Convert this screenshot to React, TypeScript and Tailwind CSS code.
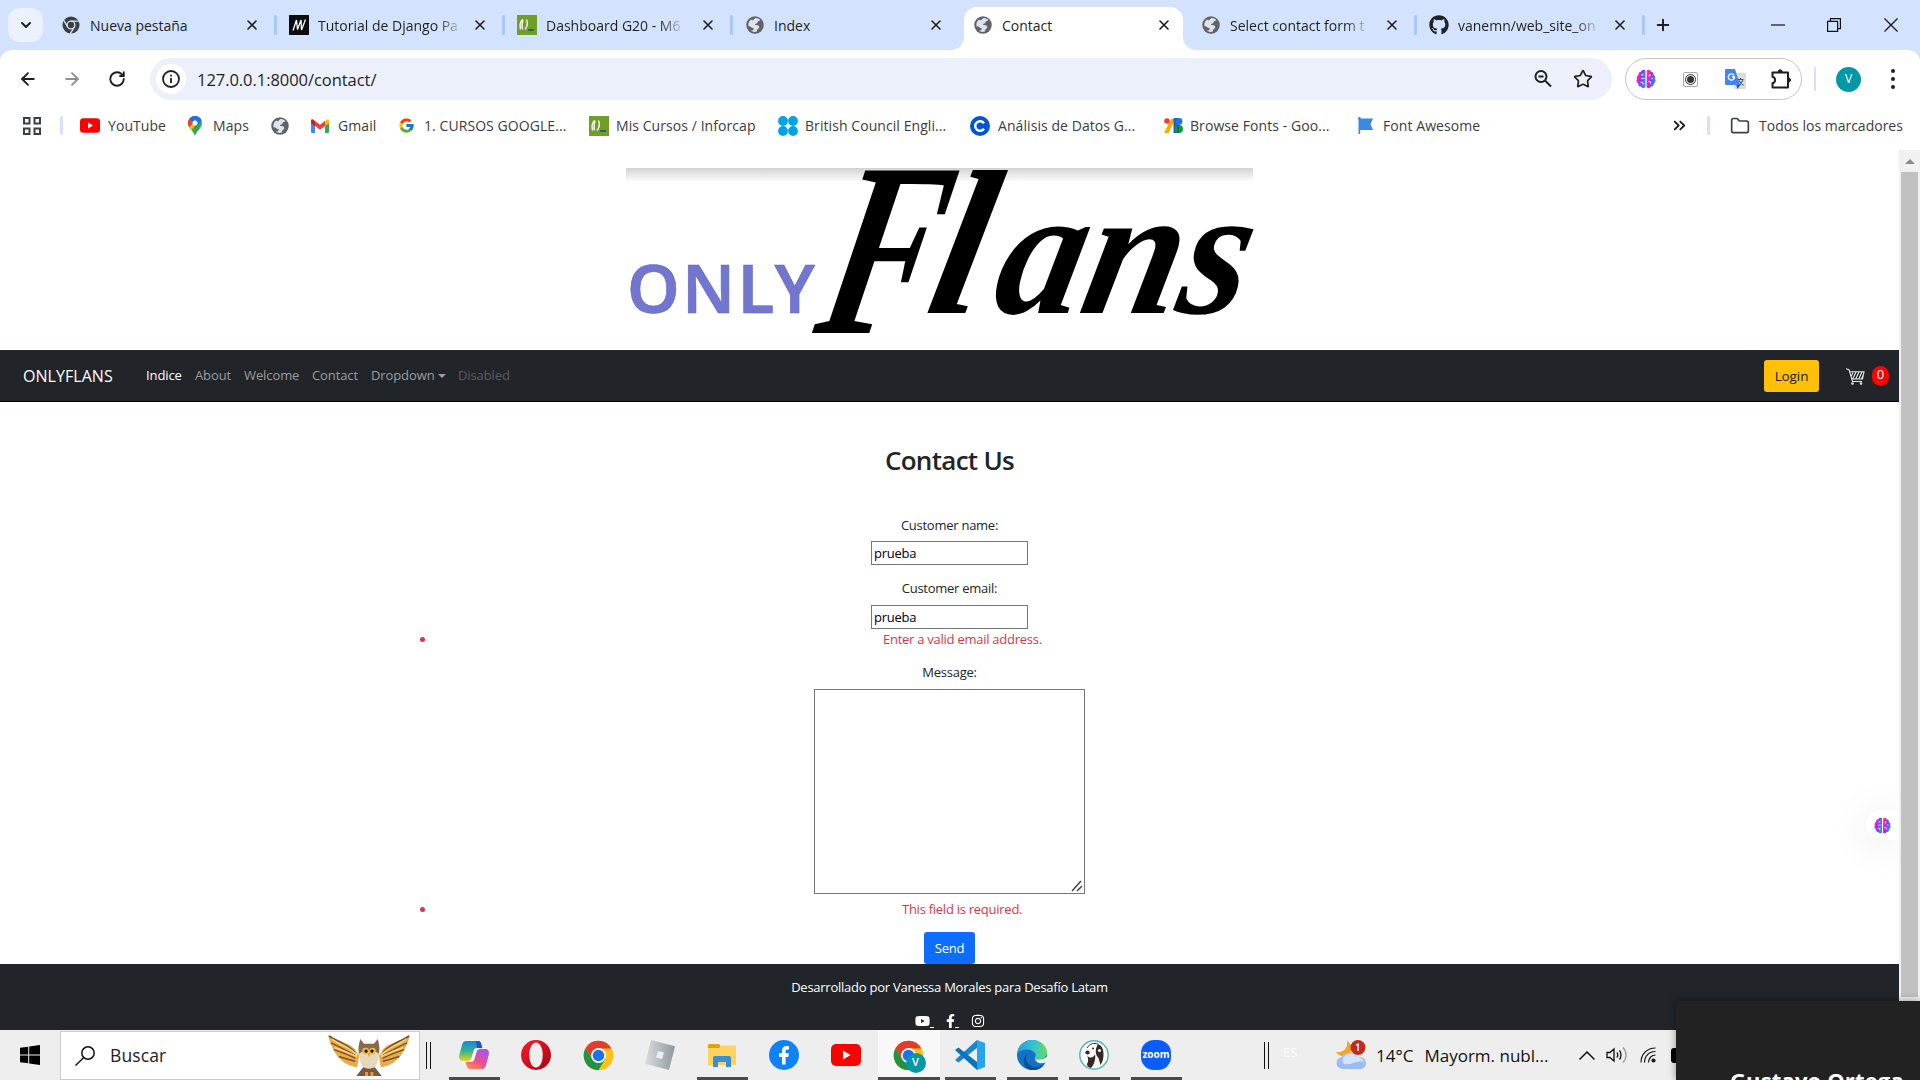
import type { ReactNode } from "react";
import { X, ChevronDown, ArrowLeft, ArrowRight, RotateCw, ZoomOut, Star, Plus, Folder, ChevronsRight } from "lucide-react";
import { FcGoogle } from "react-icons/fc";
import { FaGithub, FaFacebookF, FaYoutube, FaInstagram } from "react-icons/fa";

const Globe = () => (
  <svg viewBox="0 0 20 20" className="size-[18px]">
    <circle cx="10" cy="10" r="9.7" fill="#5f6368" />
    <path d="M10.5 2.3c2.8-.2 4.5 1.3 5.6 2.5-1 1-3.2.6-3.4 2.4-.1 1.4-2.8.8-2.6 2.8 2.7-.4 4.8.4 4.6 2.6-.2 1.8-2.4 1.6-2.6 4.6-2.3 1-5.300.3-6.800-1.100 2.300.2 3.400-.7 3.300-2.500-2.600.2-2.800-2.600-5.900-2.300C2.300 8.300 3.500 5.500 5.600 4c1.200 1.200 2.900 1.100 3.100-.3z" fill="#dfe3ea" />
  </svg>
);

const ChromeDark = () => (
  <svg viewBox="0 0 20 20" className="size-[18px]">
    <circle cx="10" cy="10" r="9.5" fill="#3c4043" />
    <g stroke="#d3e3fd" strokeWidth="1.5" fill="none">
      <circle cx="10" cy="10" r="4.300" />
      <path d="M10 5.700H18.800M6.300 12.200L2 4.800M13.700 12.200L9.300 19.500" />
    </g>
  </svg>
);

const ChromeColor = ({ cls }: { cls: string }) => (
  <svg viewBox="0 0 48 48" className={cls}>
    <circle cx="24" cy="24" r="23" fill="#fbc116" />
    <path d="M24 1A23 23 0 0 0 4.100 12.500L14 29.500 24 13h19.900A23 23 0 0 0 24 1z" fill="#e33b2e" />
    <path d="M4.100 12.500A23 23 0 0 0 24 47l10-17.300-10 5.300-10-5.500z" fill="#229342" />
    <circle cx="24" cy="24" r="11.500" fill="#fff" />
    <circle cx="24" cy="24" r="9" fill="#1a73e8" />
  </svg>
);

const CodeLogo = () => (
  <svg viewBox="0 0 20 20" className="size-5">
    <rect width="20" height="20" fill="#6f9f27" />
    <path d="M5.500 4.500C3 7 2.700 11 3.500 14.500M6 4.500C5 8 4.500 11 5.500 14.500M9.500 4.500c1.600 3.500.8 7-1.500 10" stroke="#fff" strokeWidth="1.300" fill="none" />
    <path d="M11 15h6" stroke="#235a7c" strokeWidth="1.800" />
  </svg>
);

const MLogo = () => (
  <svg viewBox="0 0 20 20" className="size-5">
    <rect width="20" height="20" fill="#0b0b10" />
    <path d="M4 15.500L7.500 5l1 9.500L12 5l.5 10L16.500 4.500" stroke="#fff" strokeWidth="1.300" fill="none" />
  </svg>
);

const YouTube = ({ cls }: { cls: string }) => (
  <svg viewBox="0 0 30 22" className={cls}>
    <rect width="30" height="22" rx="5" fill="#f00" />
    <path d="M12 6.500v9l7.500-4.500z" fill="#fff" />
  </svg>
);

const MapsPin = () => (
  <svg viewBox="0 0 14 20" className="h-5 w-[14px]">
    <path d="M7 0a7 7 0 0 1 7 7c0 5-5 7-7 13C5 14 0 12 0 7a7 7 0 0 1 7-7z" fill="#34a853" />
    <path d="M7 0a7 7 0 0 1 6.600 4.600L7 12 .5 5A7 7 0 0 1 7 0z" fill="#1a73e8" />
    <path d="M1.500 2.700L5 6l-3.400 5.300A7 7 0 0 1 1.500 2.700z" fill="#ea4335" />
    <path d="M1.500 11.200L7.500 4l2 3-5.800 7z" fill="#fbbc04" />
    <circle cx="7" cy="7" r="2.500" fill="#fff" />
  </svg>
);

const Gmail = () => (
  <svg viewBox="0 0 18 14" className="h-[14px] w-[18px]">
    <path d="M0 2v11a1 1 0 0 0 1 1h3V5z" fill="#4285f4" />
    <path d="M18 2v11a1 1 0 0 1-1 1h-3V5z" fill="#34a853" />
    <path d="M14 2l2-1.500c1-.6 2 0 2 1.500v2.200L14 7z" fill="#fbbc04" />
    <path d="M4 2L2 .5C1-.1 0 .5 0 2v2.200L4 7z" fill="#c5221f" />
    <path d="M4 2l5 3.800L14 2v5l-5 3.800L4 7z" fill="#ea4335" />
  </svg>
);

const Council = () => (
  <svg viewBox="0 0 20 20" className="size-5" fill="#00a3e6">
    <circle cx="5" cy="5" r="4.900" /><circle cx="15" cy="5" r="4.900" /><circle cx="5" cy="15" r="4.900" /><circle cx="15" cy="15" r="4.900" />
  </svg>
);

const Coursera = () => (
  <svg viewBox="0 0 20 20" className="size-5">
    <circle cx="10" cy="10" r="10" fill="#0056d2" />
    <path d="M14 7.300a4.800 4.800 0 1 0 0 5.400" stroke="#fff" strokeWidth="2.400" fill="none" />
  </svg>
);

const Fonts = () => (
  <svg viewBox="0 0 19 15" className="h-[15px] w-[19px]">
    <path d="M7 1h3v3L4.500 15H0z" fill="#f9ab00" />
    <circle cx="3" cy="3" r="2.800" fill="#ea4335" />
    <path d="M9.500 0h5v15h-5z" fill="#1a5fd0" />
    <circle cx="15" cy="3.400" r="3.400" fill="#1a73e8" />
    <circle cx="15" cy="11" r="4" fill="#149b3c" />
    <path d="M13.500 7h1.200v8h-1.200z" fill="#0d5a3c" />
  </svg>
);

const Flag = () => (
  <svg viewBox="0 0 15 17" className="h-[17px] w-[15px]">
    <circle cx="1.400" cy="1.400" r="1.400" fill="#3c8ae0" />
    <path d="M.5 1.500H15l-2.500 5.800L15 13H2.200v4H.5z" fill="#3c8ae0" />
  </svg>
);

const Brain = ({ cls, id }: { cls: string; id: string }) => (
  <svg viewBox="0 0 20 20" className={cls}>
    <defs>
      <linearGradient id={id} x1="0" x2="1" y1="0" y2=".4">
        <stop offset="0" stopColor="#ff7a2a" /><stop offset=".2" stopColor="#fb2f9a" /><stop offset=".45" stopColor="#c026e8" /><stop offset=".65" stopColor="#7a46f5" /><stop offset="1" stopColor="#2b88ff" />
      </linearGradient>
    </defs>
    <g fill={`url(#${id})`}>
      <path d="M9.400 1.500C8.500.2 5.500.6 5 2.700 3 2.800 2 4.600 2.500 6 .7 6.800.2 8.600 1 10c-1 1.500-.6 3.600 1.200 4.400C2 16.500 3.500 17.700 5 17.500c.8 2 3.800 2.100 4.400.6z" />
      <path d="M10.600 1.500C11.500.2 14.500.6 15 2.700c2 .1 3 1.900 2.500 3.300 1.800.8 2.300 2.600 1.500 4 1 1.500.6 3.600-1.200 4.400.2 2.100-1.300 3.300-2.800 3.100-.8 2-3.800 2.100-4.400.6z" />
    </g>
    <path d="M8.500 9.500H5m0-3.500h2V4.500m0 11v-2H4.500M12.500 7H14V5M12 12.500h2.500v2.500M15 9.500h2" stroke="#fff" strokeWidth=".8" fill="none" />
  </svg>
);

const tabs: { icon: ReactNode; title: string; active?: boolean; sep?: boolean; fade?: boolean }[] = [
  { icon: <ChromeDark />, title: "Nueva pestaña", sep: true },
  { icon: <MLogo />, title: "Tutorial de Django Pa", sep: true, fade: true },
  { icon: <CodeLogo />, title: "Dashboard G20 - M6", sep: true, fade: true },
  { icon: <Globe />, title: "Index" },
  { icon: <Globe />, title: "Contact", active: true },
  { icon: <Globe />, title: "Select contact form t", sep: true, fade: true },
  { icon: <FaGithub className="size-5 text-[#1f2328]" />, title: "vanemn/web_site_on", sep: true, fade: true },
];

const bookmarks: { icon: ReactNode; text: string; box: string; gap: string }[] = [
  { icon: <YouTube cls="h-[15px] w-5" />, text: "YouTube", box: "w-[108px]", gap: "gap-2" },
  { icon: <MapsPin />, text: "Maps", box: "w-[83px]", gap: "gap-[11px]" },
  { icon: <Globe />, text: "", box: "w-[40px]", gap: "gap-2" },
  { icon: <Gmail />, text: "Gmail", box: "w-[87px]", gap: "gap-[9px]" },
  { icon: <FcGoogle className="size-[17px]" />, text: "1. CURSOS GOOGLE...", box: "w-[191px]", gap: "gap-[9px]" },
  { icon: <CodeLogo />, text: "Mis Cursos / Inforcap", box: "w-[189px]", gap: "gap-[7px]" },
  { icon: <Council />, text: "British Council Engli...", box: "w-[192px]", gap: "gap-[7px]" },
  { icon: <Coursera />, text: "Análisis de Datos G...", box: "w-[194px]", gap: "gap-2" },
  { icon: <Fonts />, text: "Browse Fonts - Goo...", box: "w-[194px]", gap: "gap-[7px]" },
  { icon: <Flag />, text: "Font Awesome", box: "w-[160px]", gap: "gap-[10px]" },
];

function TabStrip() {
  return (
    <div className="flex h-[50px] bg-[#d3e3fd]">
      <div className="ml-2 mt-2 flex h-[34px] w-[35px] items-center justify-center rounded-[12px] bg-[#ebf2fe]">
        <ChevronDown className="size-4 text-[#1f1f1f]" strokeWidth={3} />
      </div>
      <div className="ml-[6px] flex">
        {tabs.map((t) => (
          <div key={t.title} className="relative flex w-[228px] items-center pl-3">
            {t.active && (
              <>
                <div className="absolute bottom-0 left-[3px] h-[43px] w-[219px] rounded-t-[13px] bg-white" />
                <svg className="absolute bottom-0 left-[-10px] size-[13px]" viewBox="0 0 13 13"><path d="M13 0v13H0A13 13 0 0 0 13 0z" fill="#fff" /></svg>
                <svg className="absolute bottom-0 right-[-7px] size-[13px]" viewBox="0 0 13 13"><path d="M0 0v13h13A13 13 0 0 1 0 0z" fill="#fff" /></svg>
              </>
            )}
            <div className="relative flex w-5 justify-center">{t.icon}</div>
            <div className="relative ml-[9px] w-[144px] text-[14px] whitespace-nowrap text-[#1f1f1f]">
              <span className={t.fade ? "bg-gradient-to-r from-[#1f1f1f] from-85% to-[#1f1f1f30] bg-clip-text text-transparent" : ""}>{t.title}</span>
            </div>
            <X className="relative ml-[10px] size-4 text-[#1f1f1f]" strokeWidth={2.4} />
            {t.sep && <div className="ml-auto h-5 w-[3px] rounded-full bg-[#a8c7fa]" />}
          </div>
        ))}
      </div>
      <div className="flex items-center pl-[9px]"><Plus className="size-[18px] text-[#1f1f1f]" strokeWidth={2.600} /></div>
      <div className="ml-auto flex items-center">
        <svg viewBox="0 0 14 14" className="mr-[42px] size-[14px]"><path d="M0 7h14" stroke="#111" strokeWidth="1.200" /></svg>
        <svg viewBox="0 0 14 14" className="mr-[43px] size-[14px]" fill="none" stroke="#111" strokeWidth="1.200"><path d="M.6 3.400h10v10h-10zM3.400 3.400V.6h10v10h-2.800" /></svg>
        <svg viewBox="0 0 14 14" className="mr-[22px] size-[14px]"><path d="M.5.5l13 13M13.500.5l-13 13" stroke="#111" strokeWidth="1.200" /></svg>
      </div>
    </div>
  );
}

function Toolbar() {
  return (
    <div className="bg-[#d3e3fd]">
      <div className="flex h-[58px] items-center rounded-t-[12px] bg-white pl-[18px]">
        <ArrowLeft className="size-5 text-[#1f1f1f]" strokeWidth={2.200} />
        <ArrowRight className="ml-6 size-5 text-[#8f9092]" strokeWidth={2.200} />
        <RotateCw className="ml-[26px] size-[18px] text-[#1f1f1f]" strokeWidth={2.500} />
        <div className="ml-6 flex h-[42px] w-[1462px] items-center rounded-full bg-[#ebf0fa]">
          <div className="ml-[6px] flex size-[30px] items-center justify-center rounded-full bg-white">
            <svg viewBox="0 0 18 18" className="size-[18px]" fill="none" stroke="#1f1f1f" strokeWidth="1.800"><circle cx="9" cy="9" r="8" /><path d="M9 8v5M9 4.800v1.800" /></svg>
          </div>
          <div className="ml-[11px] pt-[2px] text-[16.500px] tracking-[-0.05px] text-[#1f1f1f]">127.0.0.1:8000/contact/</div>
          <svg viewBox="0 0 20 20" className="ml-auto size-5" fill="none" stroke="#1f1f1f" strokeWidth="2"><circle cx="8" cy="7.500" r="5.500" /><path d="M5.500 7.500h5M12 11.500l6 6" /></svg>
          <Star className="ml-5 mr-[19px] size-5 text-[#1f1f1f]" strokeWidth={2} />
        </div>
        <div className="ml-[13px] flex h-[42px] w-[177px] items-center rounded-full border border-[#c4c7c5] pl-[10px]">
          <Brain cls="size-5" id="brain-toolbar" />
          <div className="ml-[27px] flex size-[15px] items-center justify-center rounded-[2px] border border-[#aaa]">
            <div className="flex size-[11px] items-center justify-center rounded-full border border-[#333]"><div className="size-[7px] rounded-full bg-[#333]" /></div>
          </div>
          <svg viewBox="0 0 21 21" className="ml-[27px] size-[21px]">
            <rect x="9" y="4" width="12" height="16" rx="1" fill="#dadce0" />
            <path d="M11 15h5l-3.500 5z" fill="#1b4fc4" />
            <path d="M1 0h9l5 16H1a1 1 0 0 1-1-1V1a1 1 0 0 1 1-1z" fill="#4285f4" />
            <path d="M9 6.300A3.100 3.100 0 1 0 9.500 8H6.800" stroke="#fff" strokeWidth="1.400" fill="none" />
            <path d="M12.500 10.500h6M15.500 9v1.500M17.800 11c-.5 2.500-2 4-4 5.500M14 11.500c1 2.500 2.500 3.500 4.500 4.800" stroke="#455a64" strokeWidth="1.100" fill="none" />
          </svg>
          <svg viewBox="0 0 22 22" className="ml-6 size-[22px]" fill="none" stroke="#1f1f1f" strokeWidth="2">
            <path d="M2.500 4.500H18V19.500H2.500v-4.200a3.400 3.400 0 0 0 0-6.600z" strokeLinejoin="round" />
            <path d="M8.200 3.800a2 2 0 0 1 4 0zM18.500 10a2 2 0 0 1 0 4z" fill="#1f1f1f" strokeWidth="1" />
          </svg>
        </div>
        <div className="ml-[12px] h-6 w-[2px] bg-[#d3e3fd]" />
        <div className="ml-5 flex size-[25px] items-center justify-center rounded-full bg-[#0097a7] text-[12px] text-white">V</div>
        <div className="ml-[30px] flex flex-col gap-[4px]">
          <i className="size-1 rounded-full bg-[#1f1f1f]" /><i className="size-1 rounded-full bg-[#1f1f1f]" /><i className="size-1 rounded-full bg-[#1f1f1f]" />
        </div>
      </div>
    </div>
  );
}

function BookmarkBar() {
  return (
    <div className="flex h-[42px] items-center bg-white pb-[7px] text-[14px] tracking-[0.07px] whitespace-nowrap text-[#3c3c3c]">
      <svg viewBox="0 0 18 18" className="ml-[23px] size-[18px]" fill="none" stroke="#3c4043" strokeWidth="2"><path d="M1 1h5.500v5.500H1zM11.500 1H17v5.500h-5.500zM1 11.500h5.500V17H1zM11.500 11.500H17V17h-5.500z" /></svg>
      <div className="ml-[19px] h-[19px] w-[3px] rounded-full bg-[#d3e3fd]" />
      <div className="ml-[17px] flex">
        {bookmarks.map((b, i) => (
          <div key={i} className={`flex items-center ${b.gap} ${b.box}`}>{b.icon}<span>{b.text}</span></div>
        ))}
      </div>
      <ChevronsRight className="ml-auto size-[19px] text-[#1f1f1f]" strokeWidth={2.300} />
      <div className="ml-[18px] h-[19px] w-[3px] rounded-full bg-[#d3e3fd]" />
      <Folder className="ml-5 size-5 text-[#3c4043]" strokeWidth={2} />
      <div className="ml-[9px] w-[161px] tracking-normal">Todos los marcadores</div>
    </div>
  );
}

function Logo() {
  return (
    <div className="ml-[626px] mt-[18px] h-[182px] w-[627px]">
      <div className="h-[14px] bg-gradient-to-b from-[#d2d2d2] to-white" />
      <svg viewBox="0 14 627 168" className="block h-[168px] w-[627px] overflow-visible">
        <text x="1" y="145" fontFamily="'Noto Sans','Open Sans',sans-serif" fontSize="67" fontWeight="600" fill="#7376cf" stroke="#6468cb" strokeWidth=".6" textLength="188">ONLY</text>
        <g fontFamily="'Liberation Serif',serif" fontStyle="italic" fontWeight="700" fill="#000">
          <text transform="translate(186 165) skewX(-12)" fontSize="248" textLength="116" lengthAdjust="spacingAndGlyphs">F</text>
          <text transform="translate(297 145) skewX(-12)" fontSize="206" textLength="55" lengthAdjust="spacingAndGlyphs">l</text>
          <text transform="translate(363 145) skewX(-12)" fontSize="184" textLength="252" lengthAdjust="spacingAndGlyphs">ans</text>
        </g>
      </svg>
    </div>
  );
}

function Nav() {
  return (
    <nav className="flex h-[52px] items-center border-b border-black bg-[#212529] pt-px text-[13px] tracking-[-0.1px] whitespace-nowrap">
      <div className="ml-[23px] w-[123px] text-[16px] tracking-[0.05px] text-white">ONLYFLANS</div>
      <div className="w-[49px] text-white">Indice</div>
      <div className="w-[49px] text-[#9b9d9e]">About</div>
      <div className="w-[68px] text-[#9b9d9e]">Welcome</div>
      <div className="w-[59px] text-[#9b9d9e]">Contact</div>
      <div className="flex w-[87px] items-center text-[#9b9d9e]">Dropdown<i className="ml-[3px] border-x-4 border-t-4 border-x-transparent border-t-[#9b9d9e]" /></div>
      <div className="text-[#595c5f]">Disabled</div>
      <div className="ml-auto flex h-8 w-[55px] items-center justify-center rounded-[3px] bg-[#ffc107] text-[13.500px] text-[#1a1a1a]">Login</div>
      <svg viewBox="0 0 19 17" className="ml-[27px] h-[17px] w-[19px]" fill="none" stroke="#e8e8e8" strokeWidth="1.100">
        <path d="M0 .8l3 .8L6.500 13.500H16M4 3.800h14L16.500 11H6M7 4.500L5.300 8M10 4l-3.300 7M13 4l-3.300 7M16 4l-3.300 7M18 5l-2.500 6" /><circle cx="6.500" cy="15.500" r=".8" /><circle cx="15" cy="15.500" r=".8" />
      </svg>
      <div className="ml-[7px] mr-[10px] flex h-5 w-[17px] items-center justify-center rounded-full bg-[#f00] pb-[2px] text-[13px] text-white underline decoration-[#0d6efd] underline-offset-2">0</div>
    </nav>
  );
}

function ErrorItem({ text, pad }: { text: string; pad: string }) {
  return (
    <div className="flex h-5 items-center text-[13px] text-[#dc3545]">
      <div className="ml-[420px] size-[5px] rounded-full bg-[#dc3545]" />
      <div className={pad}>{text}</div>
    </div>
  );
}

function ContactPage() {
  return (
    <div className="flex h-[562px] flex-col bg-white text-[13px] leading-5 tracking-[-0.26px] text-[#212529]">
      <h1 className="mt-[38px] text-center text-[26px] leading-[40px] font-semibold tracking-[-0.7px]">Contact Us</h1>
      <div className="mt-[35px] text-center">Customer name:</div>
      <div className="mt-[6px] flex h-6 w-[157px] items-center self-center border border-[#767676] pl-[2px] text-black">prueba</div>
      <div className="mt-[13px] text-center">Customer email:</div>
      <div className="mt-[7px] flex h-6 w-[157px] items-center self-center border border-[#767676] pl-[2px] text-black">prueba</div>
      <ErrorItem text="Enter a valid email address." pad="ml-[458px]" />
      <div className="mt-[13px] text-center">Message:</div>
      <div className="mt-[7px] flex h-[205px] w-[271px] items-end justify-end self-center border border-[#767676]">
        <svg viewBox="0 0 12 12" className="mb-[1px] mr-[1px] size-[12px]" stroke="#444" strokeWidth="1.500"><path d="M1 11L10 1M6 11l5-5" /></svg>
      </div>
      <div className="h-[5px]" />
      <ErrorItem text="This field is required." pad="ml-[477px]" />
      <div className="mt-[13px] flex h-8 w-[51px] items-center justify-center self-center rounded-[3px] bg-[#0d6efd] text-white">Send</div>
    </div>
  );
}

function Footer() {
  return (
    <footer className="h-[66px] bg-[#212529] text-white">
      <div className="pt-[13px] text-center text-[13px] leading-5 tracking-[-0.25px]">Desarrollado por Vanessa Morales para Desafío Latam</div>
      <div className="mt-[17px] flex items-center pl-[915px]">
        <FaYoutube className="h-[14px] w-[15px]" /><i className="mt-[13px] h-px w-[4px] bg-white" />
        <FaFacebookF className="ml-[12px] h-[14px] w-[9px]" /><i className="mt-[13px] h-px w-[4px] bg-white" />
        <FaInstagram className="ml-[12px] size-[14px]" />
      </div>
    </footer>
  );
}

function ScrollBar() {
  return (
    <div className="flex w-[21px] flex-col items-center bg-[#f1f1f1]">
      <div className="flex h-[22px] items-center"><i className="border-x-[5px] border-b-[5px] border-x-transparent border-b-[#8a8a8a]" /></div>
      <div className="h-[825px] w-[17px] bg-[#c1c1c1]" />
    </div>
  );
}

const Owl = () => (
  <svg viewBox="0 0 84 44" className="h-[43px] w-[84px]">
    <path d="M0 1c8 6 20 7 27 14l5 7-2 12C14 32 5 20 0 1zM84 1C76 7 64 8 57 15l-5 7 2 12C70 32 79 20 84 1z" fill="#e9ab48" />
    <path d="M1 2c9 6 19 8 27 17M3 9c9 4 16 8 25 13M6 16c8 3 15 5 22 9M11 23c6 2 10 3 17 5M83 2c-9 6-19 8-27 17M81 9c-9 4-16 8-25 13M78 16c-8 3-15 5-22 9M73 23c-6 2-10 3-17 5" stroke="#7b5227" strokeWidth="1.500" fill="none" />
    <path d="M4 5c9 7 19 8 26 17M7 14c8 3 15 5 22 9M80 5c-9 7-19 8-26 17M77 14c-8 3-15 5-22 9" stroke="#ffdc8a" strokeWidth="1.300" fill="none" />
    <path d="M33 5l4 5h10l4-5c2 8 2 11 1 16H32c-1-5-1-8 1-16z" fill="#86694e" />
    <path d="M32 20c0 10 4 17 10 17s10-7 10-17c-6-4-14-4-20 0z" fill="#e6d8bd" />
    <path d="M36 34l-7 9h26l-7-9c-4 2-8 2-12 0z" fill="#765942" />
    <circle cx="38.500" cy="17.500" r="3.500" fill="#f0b93d" /><circle cx="45.500" cy="17.500" r="3.500" fill="#f0b93d" />
    <circle cx="39" cy="17.500" r="1.700" fill="#111" /><circle cx="45" cy="17.500" r="1.700" fill="#111" />
    <path d="M40.500 19.500h3L42 24zM38 39h3v4h-3zM43.500 39h3v4h-3z" fill="#f39a23" />
  </svg>
);

const Copilot = () => (
  <svg viewBox="0 0 30 28" className="h-7 w-[30px]">
    <defs>
      <linearGradient id="cp-a" x1="0" y1="0" x2="0" y2="1"><stop offset="0" stopColor="#1588e0" /><stop offset=".5" stopColor="#35b38c" /><stop offset="1" stopColor="#e9d51c" /></linearGradient>
      <linearGradient id="cp-b" x1="0" y1="1" x2=".6" y2="0"><stop offset="0" stopColor="#ff9a4a" /><stop offset=".5" stopColor="#ef4f86" /><stop offset="1" stopColor="#a656e8" /></linearGradient>
    </defs>
    <path d="M7 0h12c2.500 0 3 2 3.500 4l.8 3H18c-2 0-3 1-3.500 3l-2 7c-.6 2-2 3-4 3H4c-4 0-4.500-3-3.500-7L3 4c.6-2.500 2-4 4-4z" fill="url(#cp-a)" />
    <path d="M23 28H11c-2.500 0-3-2-3.500-4l-.8-3H12c2 0 3-1 3.500-3l2-7c.6-2 2-3 4-3H26c4 0 4.500 3 3.500 7L27 24c-.6 2.500-2 4-4 4z" fill="url(#cp-b)" />
    <path d="M17 0h2c2.500 0 3 2 3.500 4l.8 3H18z" fill="#2454c7" />
    <path d="M17.300 10.500l-3.600 9.500-1-3 2-7c.4-1.200 1-2 2.800-2.600z" fill="#fff" />
  </svg>
);

const Opera = () => (
  <svg viewBox="0 0 30 30" className="size-[30px]">
    <defs><linearGradient id="op" x1="0" x2="1" y1="0" y2="1"><stop offset="0" stopColor="#ff1b2d" /><stop offset="1" stopColor="#a70014" /></linearGradient></defs>
    <path fillRule="evenodd" d="M15 0a15 15 0 1 1 0 30 15 15 0 0 1 0-30zm0 2.500C11 2.500 8.300 8 8.300 15S11 27.500 15 27.500 21.700 22 21.700 15 19 2.500 15 2.500z" fill="url(#op)" />
  </svg>
);

const Roblox = () => (
  <svg viewBox="0 0 30 30" className="size-[30px]">
    <defs><linearGradient id="rb" x1="0" x2="1"><stop offset="0" stopColor="#d9dde1" /><stop offset="1" stopColor="#8f979f" /></linearGradient></defs>
    <path d="M6 0l24 6.200L24 30 0 23.800z" fill="url(#rb)" />
    <path d="M13 11l-2 6.500 6 1.600 2-6.500z" fill="#eceef0" />
  </svg>
);

const Explorer = () => (
  <svg viewBox="0 0 28 23" className="h-[23px] w-7">
    <path d="M0 1a1 1 0 0 1 1-1h10l2 3-2 2H0z" fill="#e0a010" />
    <path d="M0 4h11l2-2.500h14a1 1 0 0 1 1 1V21H0z" fill="#ffd260" />
    <path d="M5 23v-9a2 2 0 0 1 2-2h14a2 2 0 0 1 2 2v9h-5v-5h-8v5z" fill="#3a8fd4" />
  </svg>
);

const VsCode = () => (
  <svg viewBox="0 0 30 30" className="size-[30px]">
    <path d="M22 0v8L3.500 22.500 0 20z" fill="#1b86cf" />
    <path d="M22 30v-8L3.500 7.500 0 10z" fill="#0a72b8" />
    <path d="M22 0l8 3v24l-8 3z" fill="#2aa3ef" />
  </svg>
);

const Edge = () => (
  <svg viewBox="0 0 30 30" className="size-[30px]">
    <defs>
      <linearGradient id="eg" x1="0" x2="1"><stop offset="0" stopColor="#279de2" /><stop offset=".55" stopColor="#32c3d2" /><stop offset="1" stopColor="#6ade5a" /></linearGradient>
    </defs>
    <circle cx="15" cy="15" r="15" fill="#1173c4" />
    <path d="M0 14C1 5 8 0 15 0c9 0 15 6.500 15 12 0 5-4 7.500-8 7.500s-4.500-1.500-4-2.500c1-1.500.8-3-.5-4.500C14 8.500 4 8 0 14z" fill="url(#eg)" />
    <path d="M9 17c0 7 6 11 12 10 3-.5 6-2.500 7.500-5C25 31 15 31.500 10.500 29 5 25 5 16 13 11.500 10 13 9 15 9 17z" fill="#0c4f9c" />
    <path d="M18 17c-.5 1 0 2.500 4 2.500s6.500-1.500 8.500-3.500c0 2-.5 4.500-1.500 6-5 3-12 .5-11-5z" fill="#eee" />
  </svg>
);

const Beaver = () => (
  <svg viewBox="0 0 30 30" className="size-[30px]">
    <circle cx="15" cy="15" r="14.200" fill="#fff" stroke="#56b7b5" strokeWidth="1.500" />
    <path d="M19 4c5 2 5.500 7 5.500 11 0 4-1 7-3 10l-2-7c-3-3-4-8-.5-14zM8 15c2 4 7 3 8-1 1 5-1 11-4 14-3-1-4-2-4-4 2-3 1-6 0-9z" fill="#382923" />
    <path d="M8 8c3-5 7-5 11-4" stroke="#382923" strokeWidth="1" fill="none" />
    <ellipse cx="8.500" cy="12.500" rx="2.200" ry="1.900" fill="#382923" /><circle cx="14" cy="8.500" r="1" fill="#382923" /><circle cx="20.500" cy="10.500" r="1.600" fill="#fff" />
  </svg>
);

const taskItems: { icon: ReactNode; open?: boolean; active?: boolean }[] = [
  { icon: <Copilot />, open: true },
  { icon: <Opera /> },
  { icon: <ChromeColor cls="size-[31px]" /> },
  { icon: <Roblox /> },
  { icon: <Explorer />, open: true },
  { icon: <svg viewBox="0 0 30 30" className="size-[30px]"><circle cx="15" cy="15" r="15" fill="#0f82f5" /><path d="M13 24.500V17h-3v-3.700h3V11c0-3.500 1.800-5 4.800-5l2.200.2v3.400h-1.700c-1.400 0-1.700.7-1.700 1.700v2h3.300L19.300 17h-2.700v7.500z" fill="#fff" /></svg> },
  { icon: <YouTube cls="h-[22px] w-[30px]" /> },
  { icon: <div className="relative"><ChromeColor cls="size-[31px]" /><div className="absolute right-[-2px] bottom-[-2px] flex size-5 items-center justify-center rounded-full bg-[#0797a5] text-[11px] font-semibold text-white">V</div></div>, open: true, active: true },
  { icon: <VsCode />, open: true },
  { icon: <Edge />, open: true },
  { icon: <Beaver />, open: true },
  { icon: <div className="flex size-[30px] items-center justify-center rounded-[13px] bg-[#0b5cff] pb-[2px] text-[10px] font-bold text-white">zoom</div>, open: true },
];

const Grip = () => <div className="h-[27px] w-[5px] border-x border-[#111]" />;

function Taskbar() {
  return (
    <div className="flex h-[50px] items-center bg-[#eee] whitespace-nowrap">
      <svg viewBox="0 0 20 20" className="ml-5 size-5"><path d="M0 2.800L8.200 1.700v7.800H0zM9.200 1.500L20 0v9.500H9.200zM0 10.500h8.200v7.800L0 17.200zM9.200 10.500H20V20L9.200 18.500z" /></svg>
      <div className="ml-5 flex h-[49px] w-[360px] items-center self-end border border-[#ccc] bg-white">
        <svg viewBox="0 0 20 20" className="ml-[14px] size-5" fill="none" stroke="#111" strokeWidth="1.500"><circle cx="13" cy="7" r="6.200" /><path d="M8.800 11.500L.5 19.500" /></svg>
        <div className="ml-[15px] w-[217px] text-[17.500px] tracking-[0.1px] text-[#222]">Buscar</div>
        <Owl />
      </div>
      <div className="ml-[6px]"><Grip /></div>
      <div className="ml-[13px] flex self-stretch">
        {taskItems.map((t, i) => (
          <div key={i} className={t.active ? "relative flex w-[62px] items-center justify-center bg-[#f8f8f8] pr-[2px]" : "relative flex w-[62px] items-center justify-center pr-[2px]"}>
            {t.icon}
            {t.open && <div className={t.active ? "absolute inset-x-0 bottom-0 h-[3px] bg-[#484a4b]" : "absolute bottom-0 left-[5px] h-[3px] w-[51px] bg-[#484a4b]"} />}
          </div>
        ))}
      </div>
      <div className="ml-[76px]"><Grip /></div>
      <div className="ml-[14px] w-[53px] pb-1 text-[13px] text-[#fcfaf7]">ES</div>
      <svg viewBox="0 0 30 30" className="h-[30px] w-[30px]">
        <path d="M11 1c7 4 6 14-1 15-4 1-8-1-10-4 8 1 12-4 11-11z" fill="#f5a623" />
        <path d="M7 29a6 6 0 0 1-1-12c1-5 13-6 15 0 6-1 9 3 9 6 0 4-3 6-6 6z" fill="#9dbdf2" />
        <path d="M8 24a5 5 0 0 1 0-7c2-4 10-5 12 0 5 0 7 2 8 5-6-3-13 4-20 2z" fill="#d4e3fb" />
        <circle cx="22" cy="7.500" r="7.500" fill="#c42b1c" /><path d="M20 5.500l2.200-1.500v7" stroke="#fff" strokeWidth="1.300" fill="none" />
      </svg>
      <div className="ml-[10px] flex w-[203px] gap-[11px] pt-px text-[17px] text-[#111]"><span>14°C</span><span>Mayorm. nubl...</span></div>
      <svg viewBox="0 0 16 9" className="h-[9px] w-4" fill="none" stroke="#111" strokeWidth="1.500"><path d="M.5 8.500L8 1l7.500 7.500" /></svg>
      <svg viewBox="0 0 21 18" className="ml-[11px] h-[18px] w-[21px]" fill="none" stroke="#111" strokeWidth="1.300"><path d="M1 6.500h3L8 3v12l-4-3.500H1zM11 6.500c1 1.500 1 3.500 0 5M13.500 4.500c2 2.500 2 6.500 0 9" /><path d="M17 1.500c4 4 4 11 0 15" stroke="#999" /></svg>
      <svg viewBox="0 0 16 16" className="ml-[13px] size-4" fill="none" stroke="#111" strokeWidth="1.200"><path d="M1 15.500C1 7 7 1 15.500 1M4.500 15.500c0-6.500 4.500-11 11-11M8.500 15.500c0-4 3-7.500 7-7.500" /><circle cx="13.500" cy="13.500" r="1.500" fill="#111" /></svg>
      <div className="ml-[15px] h-[15px] w-4 rounded-[3px] bg-black" />
    </div>
  );
}

export default function App() {
  return (
    <div className="relative h-[1080px] w-[1920px] overflow-hidden bg-white font-['Open_Sans','Noto_Sans',sans-serif]">
      <TabStrip />
      <Toolbar />
      <BookmarkBar />
      <div className="flex h-[880px]">
        <main className="w-[1899px]">
          <Logo />
          <Nav />
          <ContactPage />
          <Footer />
        </main>
        <ScrollBar />
      </div>
      <Taskbar />
      <div className="absolute top-[810px] right-[21px] flex h-[30px] w-[33px] items-center rounded-l-full bg-white pl-[8px] shadow-[0_4px_40px_rgba(0,0,0,0.10)] [clip-path:inset(-60px_0_-60px_-60px)]">
        <Brain cls="size-[17px]" id="brain-float" />
      </div>
      <div className="absolute top-[1001px] left-[1676px] h-[79px] w-[244px] overflow-hidden bg-[#222] shadow-[0_0_8px_rgba(0,0,0,0.4)]">
        <div className="mt-[64px] ml-[54px] text-[22px] leading-[30px] font-bold tracking-[0.15px] whitespace-nowrap text-white">Gustavo Ortega</div>
      </div>
    </div>
  );
}
